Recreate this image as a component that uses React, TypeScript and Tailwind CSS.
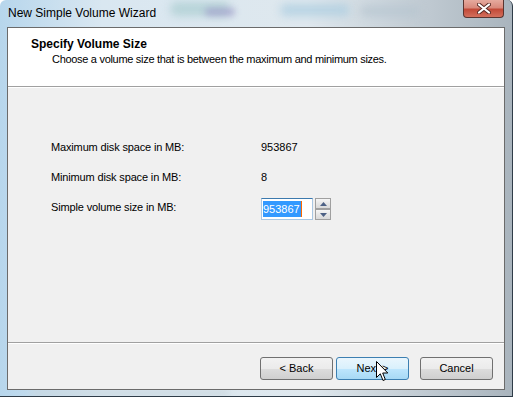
import React from "react"

const font = { fontFamily: '"Liberation Sans", Arial, sans-serif' }

export default function App() {
  return (
    <div
      className="relative w-[513px] h-[397px] overflow-hidden rounded-t-[6px] border-r border-b border-[#2f3c48] bg-[linear-gradient(90deg,#b7d6ec_0%,#d9e7f1_20%,#dfe8ee_60%,#a9b4bd_100%)] flex flex-col"
      style={font}
    >
      {/* glass blur blobs */}
      <div className="absolute left-[170px] top-[2px] w-[60px] h-[14px] rounded-full bg-[#9fc7c9] opacity-60 blur-[4px]" />
      <div className="absolute left-[205px] top-[8px] w-[30px] h-[8px] rounded-full bg-[#9a93c7] opacity-60 blur-[3px]" />
      <div className="absolute left-[280px] top-[4px] w-[70px] h-[12px] rounded-full bg-[#a9cce0] opacity-70 blur-[4px]" />
      <div className="absolute left-[360px] top-[6px] w-[60px] h-[10px] rounded-full bg-[#b5c4cf] opacity-70 blur-[4px]" />
      <div className="absolute left-[30px] bottom-[0px] w-[200px] h-[6px] rounded-full bg-[#c9d6dd] opacity-80 blur-[3px]" />

      {/* title bar */}
      <div className="relative h-[27px] flex items-start shrink-0">
        <span className="ml-[8px] mt-[5px] text-[12px] leading-[16px] text-black">
          New Simple Volume Wizard
        </span>
        <div className="absolute right-[8px] top-0 w-[41px] h-[18px] rounded-b-[4px] border border-t-0 border-[#5a3530] bg-[linear-gradient(180deg,#e6aa9e_0%,#d98a7c_45%,#c24a38_55%,#d36f5c_100%)] flex items-center justify-center">
          <svg width="14" height="11" viewBox="0 0 14 11">
            <path d="M2 1.5 L12 9.5 M12 1.5 L2 9.5" stroke="#5a2b25" strokeWidth="4" strokeLinecap="round" />
            <path d="M2 1.5 L12 9.5 M12 1.5 L2 9.5" stroke="#ffffff" strokeWidth="2.2" strokeLinecap="round" />
          </svg>
        </div>
      </div>

      {/* client area */}
      <div className="relative mx-[7px] h-[363px] border border-[#6b6b6b] bg-[#f0f0f0] flex flex-col">
        {/* header */}
        <div className="h-[59px] bg-white border-b border-[#a0a0a0] pt-[10px] pl-[23px] shrink-0">
          <div className="text-[12px] leading-[13px] font-bold text-black">Specify Volume Size</div>
          <div className="mt-[2px] pl-[21px] text-[11px] leading-[13px] tracking-[-0.3px] text-black">
            Choose a volume size that is between the maximum and minimum sizes.
          </div>
        </div>
        <div className="h-px bg-white shrink-0" />

        {/* body */}
        <div className="flex-1 pt-[44px] pl-[43px]">
          <div className="grid grid-cols-[210px_auto] text-[11px] leading-[13px] text-black">
            <div className="h-[30px] flex items-center tracking-[-0.15px]">Maximum disk space in MB:</div>
            <div className="h-[30px] flex items-center">953867</div>
            <div className="h-[30px] flex items-center tracking-[-0.15px]">Minimum disk space in MB:</div>
            <div className="h-[30px] flex items-center">8</div>
            <div className="h-[30px] flex items-center tracking-[-0.15px]">Simple volume size in MB:</div>
            <div className="h-[30px] flex items-start pt-[6px]">
              <div className="w-[52px] h-[22px] border border-[#a9c7e3] border-t-[#3c79ad] bg-white flex items-center pl-[1px]">
                <span className="relative bg-[#3399ff] text-white h-[16px] flex items-center pr-[1px]">
                  953867
                  <span className="absolute right-[-1px] top-0 w-px h-[16px] bg-[#ff6a00]" />
                </span>
              </div>
              <div className="ml-[2px] w-[16px] h-[22px] flex flex-col">
                <SpinButton up />
                <SpinButton />
              </div>
            </div>
          </div>
        </div>

        {/* footer */}
        <div className="h-[47px] border-t border-[#a0a0a0] shrink-0">
          <div className="h-px bg-white" />
          <div className="flex justify-end gap-[3px] pt-[13px] pr-[11px]">
            <WizButton>&lt; Back</WizButton>
            <WizButton active>Next &gt;</WizButton>
            <div className="w-[5px]" />
            <WizButton>Cancel</WizButton>
          </div>
        </div>

        {/* mouse cursor */}
        <svg className="absolute left-[368px] top-[333px]" width="13" height="21" viewBox="0 0 13 21">
          <path
            d="M0.5 0.5 L0.5 16.5 L4.3 12.8 L7 19.5 L9.3 18.5 L6.7 12 L11.8 12 Z"
            fill="#ffffff"
            stroke="#000000"
            strokeWidth="1"
            strokeLinejoin="miter"
          />
        </svg>
      </div>
    </div>
  )
}

function SpinButton({ up = false }: { up?: boolean }) {
  return (
    <div className="h-[11px] border border-[#a0a0a0] bg-[linear-gradient(180deg,#f6f6f6_0%,#e6e6e6_50%,#d9d9d9_100%)] flex items-center justify-center">
      <svg width="7" height="4" viewBox="0 0 7 4">
        {up ? <path d="M0 4 L3.5 0 L7 4 Z" fill="#4d6185" /> : <path d="M0 0 L3.5 4 L7 0 Z" fill="#4d6185" />}
      </svg>
    </div>
  )
}

function WizButton({ children, active = false }: { children: React.ReactNode; active?: boolean }) {
  return (
    <div
      className={`w-[73px] h-[23px] rounded-[3px] border flex items-center justify-center text-[11px] text-black ${
        active
          ? "border-[#3c7fb1] bg-[linear-gradient(180deg,#eaf6fd_0%,#d9f0fc_50%,#bee6fd_51%,#a7d9f5_100%)]"
          : "border-[#707070] bg-[linear-gradient(180deg,#f2f2f2_0%,#ebebeb_50%,#dddddd_51%,#cfcfcf_100%)]"
      }`}
    >
      {children}
    </div>
  )
}
